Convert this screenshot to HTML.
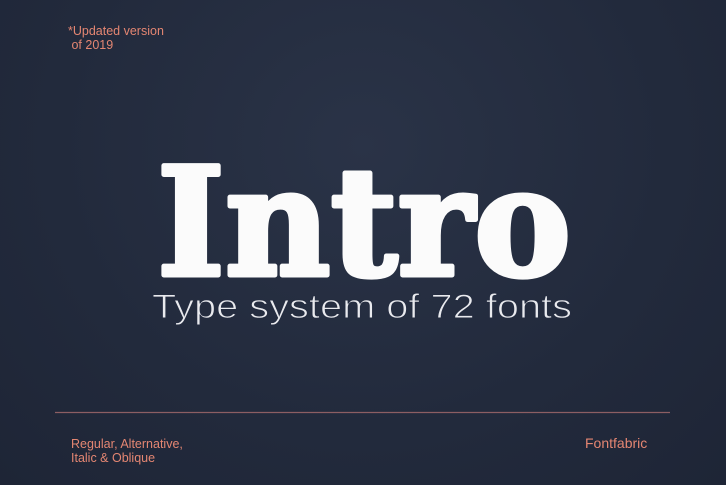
<!DOCTYPE html>
<html><head><meta charset="utf-8"><style>
html,body{margin:0;padding:0}
body{width:726px;height:485px;overflow:hidden;background:radial-gradient(ellipse at 50% 30%,#2a3347 0%,#222a3c 60%,#1e2536 100%);position:relative;font-family:"Liberation Sans",sans-serif}
.t{position:absolute;color:#e48672;font-size:12.5px;line-height:14px}
svg{position:absolute;left:0;top:0}
</style></head><body>
<div class="t" style="left:68px;top:24px">*Updated version<br>&nbsp;of 2019</div>
<svg width="726" height="485">
<text x="157" y="275" font-family="DejaVu Serif" font-weight="bold" font-size="150" fill="#fbfbfb" stroke="#fbfbfb" stroke-width="5" stroke-linejoin="round" textLength="414" lengthAdjust="spacingAndGlyphs">Intro</text>
<text x="152" y="318" font-family="Liberation Sans" font-size="34" fill="#e9eaee" stroke="#252d40" stroke-width="1" textLength="420" lengthAdjust="spacingAndGlyphs">Type system of 72 fonts</text>
<line x1="55" y1="412.5" x2="670" y2="412.5" stroke="#8c5e63" stroke-width="1.3"/>
</svg>
<div class="t" style="left:71px;top:437px">Regular, Alternative,<br>Italic &amp; Oblique</div>
<div class="t" style="left:585px;top:436px;font-size:14px">Fontfabric</div>
</body></html>
